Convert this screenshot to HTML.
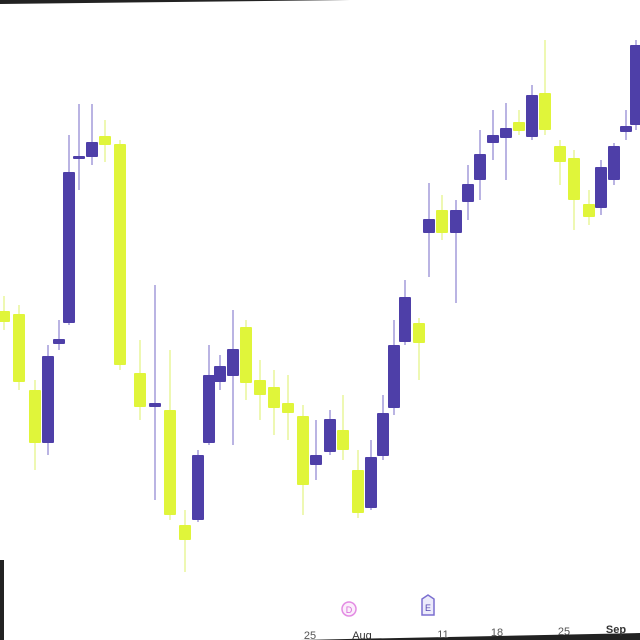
<!DOCTYPE html>
<html><head><meta charset="utf-8"><style>
html,body{margin:0;padding:0;background:#fff;width:640px;height:640px;overflow:hidden}
svg{display:block}
text{font-family:"Liberation Sans",sans-serif;font-size:11px;fill:#555}
</style></head><body>
<svg width="640" height="640" viewBox="0 0 640 640">
<rect width="640" height="640" fill="#fff"/>
<polygon points="0,0 350,0 0,4" fill="#222"/>
<polygon points="300,640 640,640 640,633" fill="#222"/>
<rect x="0" y="560" width="4" height="80" fill="#222"/>
<g id="c"></g>
<circle cx="349" cy="609" r="7" fill="#fbeefb" stroke="#e38be3" stroke-width="1.5"/>
<text x="349" y="613" text-anchor="middle" style="font-size:9px;fill:#d86ad8">D</text>
<path d="M422,599 L428,595 L434,599 L434,615 L422,615 Z" fill="#ecebfb" stroke="#7b6fd0" stroke-width="1.5"/>
<text x="428" y="611" text-anchor="middle" style="font-size:9px;fill:#5547b0">E</text>
<text x="310" y="639" text-anchor="middle">25</text>
<text x="362" y="639" text-anchor="middle" style="fill:#333">Aug</text>
<text x="443" y="638" text-anchor="middle">11</text>
<text x="497" y="636" text-anchor="middle">18</text>
<text x="564" y="635" text-anchor="middle">25</text>
<text x="616" y="633" text-anchor="middle" style="fill:#333;font-weight:bold">Sep</text>
</svg>
<script>
var d=[[4,311,322,296,330,'Y'],[19,314,382,305,390,'Y'],[35,390,443,380,470,'Y'],[48,356,443,345,455,'P'],[59,339,344,320,350,'P'],[69,172,323,135,325,'P'],[79,156,159,104,190,'P'],[92,142,157,104,165,'P'],[105,136,145,120,162,'Y'],[120,144,365,140,370,'Y'],[140,373,407,340,420,'Y'],[155,403,407,285,500,'P'],[170,410,515,350,520,'Y'],[185,525,540,510,572,'Y'],[198,455,520,450,522,'P'],[209,375,443,345,445,'P'],[220,366,382,355,390,'P'],[233,349,376,310,445,'P'],[246,327,383,320,400,'Y'],[260,380,395,360,420,'Y'],[274,387,408,370,435,'Y'],[288,403,413,375,440,'Y'],[303,416,485,405,515,'Y'],[316,455,465,420,480,'P'],[330,419,452,410,455,'P'],[343,430,450,395,460,'Y'],[358,470,513,450,518,'Y'],[371,457,508,440,510,'P'],[383,413,456,395,460,'P'],[394,345,408,320,415,'P'],[405,297,342,280,345,'P'],[419,323,343,318,380,'Y'],[429,219,233,183,277,'P'],[442,210,233,195,240,'Y'],[456,210,233,200,303,'P'],[468,184,202,165,220,'P'],[480,154,180,130,200,'P'],[493,135,143,110,160,'P'],[506,128,138,103,180,'P'],[519,122,131,110,135,'Y'],[532,95,137,85,140,'P'],[545,93,130,40,135,'Y'],[560,146,162,140,185,'Y'],[574,158,200,150,230,'Y'],[589,204,217,190,225,'Y'],[601,167,208,160,215,'P'],[614,146,180,143,185,'P'],[626,126,132,110,140,'P'],[636,45,125,40,130,'P']];
var s='';d.forEach(function(c){var col=c[5]=='P'?'#4e3fa8':'#e0f53a',wc=c[5]=='P'?'#a9a2dc':'#eaf7a0';
s+='<line x1="'+c[0]+'" y1="'+c[3]+'" x2="'+c[0]+'" y2="'+c[4]+'" stroke="'+wc+'" stroke-width="1.6"/>';
s+='<rect x="'+(c[0]-6)+'" y="'+c[1]+'" width="12" height="'+Math.max(3,c[2]-c[1])+'" fill="'+col+'" rx="1"/>';});
document.getElementById('c').innerHTML=s;
</script>
</body></html>
